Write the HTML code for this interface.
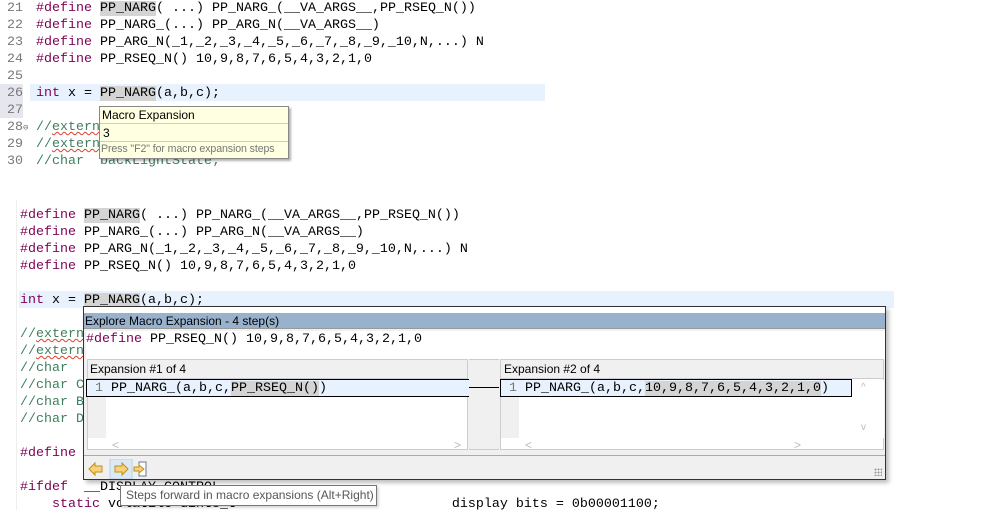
<!DOCTYPE html>
<html><head><meta charset="utf-8"><style>
*{margin:0;padding:0;box-sizing:border-box}
body{width:986px;height:518px;background:#fff;position:relative;overflow:hidden;font-family:"Liberation Mono",monospace;font-size:13.33px;color:#000}
.l{position:absolute;white-space:pre;height:17px;line-height:17px}
.k{color:#7f0055}
.c{color:#3f7f5f}
.n{color:#787878}
.h{background:#d4d4d4}
.sq{text-decoration:underline wavy #e0402a;text-decoration-thickness:1px}
.ui{font-family:"Liberation Sans",sans-serif;font-size:12px;white-space:nowrap}
</style></head><body>
<div style="position:absolute;left:0;top:84px;width:23px;height:34px;background:#e6e6ef"></div>
<div style="position:absolute;left:30px;top:84px;width:515px;height:17px;background:#e8f2fe"></div>
<div class="l n" style="left:7px;top:0">21</div>
<div class="l n" style="left:7px;top:17px">22</div>
<div class="l n" style="left:7px;top:34px">23</div>
<div class="l n" style="left:7px;top:51px">24</div>
<div class="l n" style="left:7px;top:68px">25</div>
<div class="l n" style="left:7px;top:85px">26</div>
<div class="l n" style="left:7px;top:102px">27</div>
<div class="l n" style="left:7px;top:119px">28<span style="font-size:9px">⊖</span></div>
<div class="l n" style="left:7px;top:136px">29</div>
<div class="l n" style="left:7px;top:153px">30</div>
<div class="l" style="left:36px;top:0"><span class="k">#define</span> <span class="h">PP_NARG</span>( ...) PP_NARG_(__VA_ARGS__,PP_RSEQ_N())</div>
<div class="l" style="left:36px;top:17px"><span class="k">#define</span> PP_NARG_(...) PP_ARG_N(__VA_ARGS__)</div>
<div class="l" style="left:36px;top:34px"><span class="k">#define</span> PP_ARG_N(_1,_2,_3,_4,_5,_6,_7,_8,_9,_10,N,...) N</div>
<div class="l" style="left:36px;top:51px"><span class="k">#define</span> PP_RSEQ_N() 10,9,8,7,6,5,4,3,2,1,0</div>
<div class="l" style="left:36px;top:85px"><span class="k">int</span> x = <span class="h">PP_NARG</span>(a,b,c);</div>
<div class="l c" style="left:36px;top:119px">//<span class="sq">extern</span>                      s;</div>
<div class="l c" style="left:36px;top:136px">//<span class="sq">extern</span>                      1;</div>
<div class="l c" style="left:36px;top:153px">//char  backLightState;</div>
<div class="ui" style="position:absolute;left:99px;top:106px;width:190px;height:53px;background:#ffffe1;border:1px solid #888;box-shadow:2px 2px 2px rgba(0,0,0,.3);overflow:hidden">
<div style="height:17px;line-height:16px;padding-left:2px;border-bottom:1px solid #ccc">Macro Expansion</div>
<div style="height:18px;line-height:18px;padding-left:3px;border-bottom:1px solid #ccc">3</div>
<div style="height:16px;line-height:15px;padding-left:1px;color:#777;font-size:10.6px;letter-spacing:-0.1px">Press "F2" for macro expansion steps</div>
</div>

<div style="position:absolute;left:16px;top:200px;width:1px;height:310px;background:#eee"></div>
<div style="position:absolute;left:19px;top:291px;width:875px;height:17px;background:#e8f2fe"></div>
<div class="l" style="left:20px;top:207px"><span class="k">#define</span> <span class="h">PP_NARG</span>( ...) PP_NARG_(__VA_ARGS__,PP_RSEQ_N())</div>
<div class="l" style="left:20px;top:224px"><span class="k">#define</span> PP_NARG_(...) PP_ARG_N(__VA_ARGS__)</div>
<div class="l" style="left:20px;top:241px"><span class="k">#define</span> PP_ARG_N(_1,_2,_3,_4,_5,_6,_7,_8,_9,_10,N,...) N</div>
<div class="l" style="left:20px;top:258px"><span class="k">#define</span> PP_RSEQ_N() 10,9,8,7,6,5,4,3,2,1,0</div>
<div class="l" style="left:20px;top:292px"><span class="k">int</span> x = <span class="h">PP_NARG</span>(a,b,c);</div>
<div class="l c" style="left:20px;top:326px">//<span class="sq">extern</span></div>
<div class="l c" style="left:20px;top:343px">//<span class="sq">extern</span></div>
<div class="l c" style="left:20px;top:360px">//char</div>
<div class="l c" style="left:20px;top:377px">//char C</div>
<div class="l c" style="left:20px;top:394px">//char B</div>
<div class="l c" style="left:20px;top:411px">//char D</div>
<div class="l k" style="left:20px;top:445px">#define</div>
<div class="l" style="left:20px;top:479px"><span class="k">#ifdef</span>  __DISPLAY_CONTROL</div>
<div class="l" style="left:20px;top:496px">    <span class="k">static</span> volatile uint8_t                           display bits = 0b00001100;</div>

<div style="position:absolute;left:83px;top:306px;width:803px;height:174px;background:#f0f0f0;border:1px solid #333;box-shadow:3px 3px 4px rgba(0,0,0,.25)">
<div style="position:absolute;left:0;top:0;width:801px;height:6px;background:#fff"></div>
<div class="ui" style="position:absolute;left:0;top:6px;width:801px;height:16px;background:#98b2ce;line-height:16px;padding-left:1px;border-bottom:1px solid #999">Explore Macro Expansion - 4 step(s)</div>
<div class="l" style="left:2px;top:24px;width:799px;height:30px;background:#fff"><span class="k">#define</span> PP_RSEQ_N() 10,9,8,7,6,5,4,3,2,1,0</div>
<div style="position:absolute;left:3px;top:52px;width:381px;height:91px;border:1px solid #ccc;background:#fff">
<div class="ui" style="height:19px;line-height:19px;background:#f0f0f0;padding-left:2px;border-bottom:1px solid #ccc">Expansion #1 of 4</div>
<div style="position:absolute;left:0;top:20px;width:18px;height:58px;background:#f0f0f0"></div>
<div class="l" style="left:-2px;top:19px;width:385px;height:18px;border:1px solid #000;background:#e8f2fe"><span class="n"> 1 </span>PP_NARG_(a,b,c,<span class="h">PP_RSEQ_N()</span>)</div>
<div class="ui" style="position:absolute;left:24px;top:78px;color:#bbb">&lt;</div>
<div class="ui" style="position:absolute;left:366px;top:78px;color:#bbb">&gt;</div>
</div>
<div style="position:absolute;left:385px;top:52px;width:30px;height:91px;border:1px solid #ccc;border-left:0;border-right:0;background:#f0f0f0"><div style="position:absolute;top:27px;left:0;width:30px;height:1px;background:#000"></div></div>
<div style="position:absolute;left:416px;top:52px;width:384px;height:91px;border:1px solid #ccc;background:#fff">
<div class="ui" style="height:19px;line-height:19px;background:#f0f0f0;padding-left:3px;border-bottom:1px solid #ccc">Expansion #2 of 4</div>
<div style="position:absolute;left:0;top:20px;width:18px;height:58px;background:#f0f0f0"></div>
<div class="l" style="left:-1px;top:19px;width:352px;height:18px;border:1px solid #000;background:#e8f2fe"><span class="n"> 1 </span>PP_NARG_(a,b,c,<span class="h">10,9,8,7,6,5,4,3,2,1,0</span>)</div>
<div style="position:absolute;left:351px;top:20px;width:32px;height:58px;background:#fff"></div>
<div class="ui" style="position:absolute;left:360px;top:22px;color:#bbb;font-size:10px">^</div>
<div class="ui" style="position:absolute;left:360px;top:62px;color:#bbb;font-size:10px">v</div>
<div class="ui" style="position:absolute;left:24px;top:78px;color:#bbb">&lt;</div>
<div class="ui" style="position:absolute;left:293px;top:78px;color:#bbb">&gt;</div>
</div>
<div style="position:absolute;left:0;top:148px;width:801px;height:1px;background:#aaa"></div>
<svg style="position:absolute;left:3px;top:152px" width="60" height="20">
<path d="M2 10 L8 4 L8 7 L15 7 L15 13 L8 13 L8 16 Z" fill="#f7d27a" stroke="#c0901a"/>
<rect x="23" y="0" width="22" height="20" fill="#dbe8f5" stroke="#b8cfe6"/>
<path d="M41 10 L35 4 L35 7 L28 7 L28 13 L35 13 L35 16 Z" fill="#f7d27a" stroke="#c0901a"/>
<rect x="52" y="3" width="7" height="14" fill="#fff" stroke="#6a7a9a"/>
<path d="M57 10 L52 6 L52 8 L47 8 L47 12 L52 12 L52 14 Z" fill="#f7d27a" stroke="#c0901a"/>
</svg>
<div style="position:absolute;right:3px;bottom:3px;width:8px;height:8px;background:radial-gradient(#999 0.8px,transparent 1px) 0 0/3px 3px"></div>
</div>
<div class="ui" style="position:absolute;left:120px;top:485px;width:257px;height:21px;background:#fff;border:1px solid #767676;line-height:19px;padding-left:5px;color:#575757;box-shadow:2px 2px 2px rgba(0,0,0,.15)">Steps forward in macro expansions (Alt+Right)</div>
</body></html>
